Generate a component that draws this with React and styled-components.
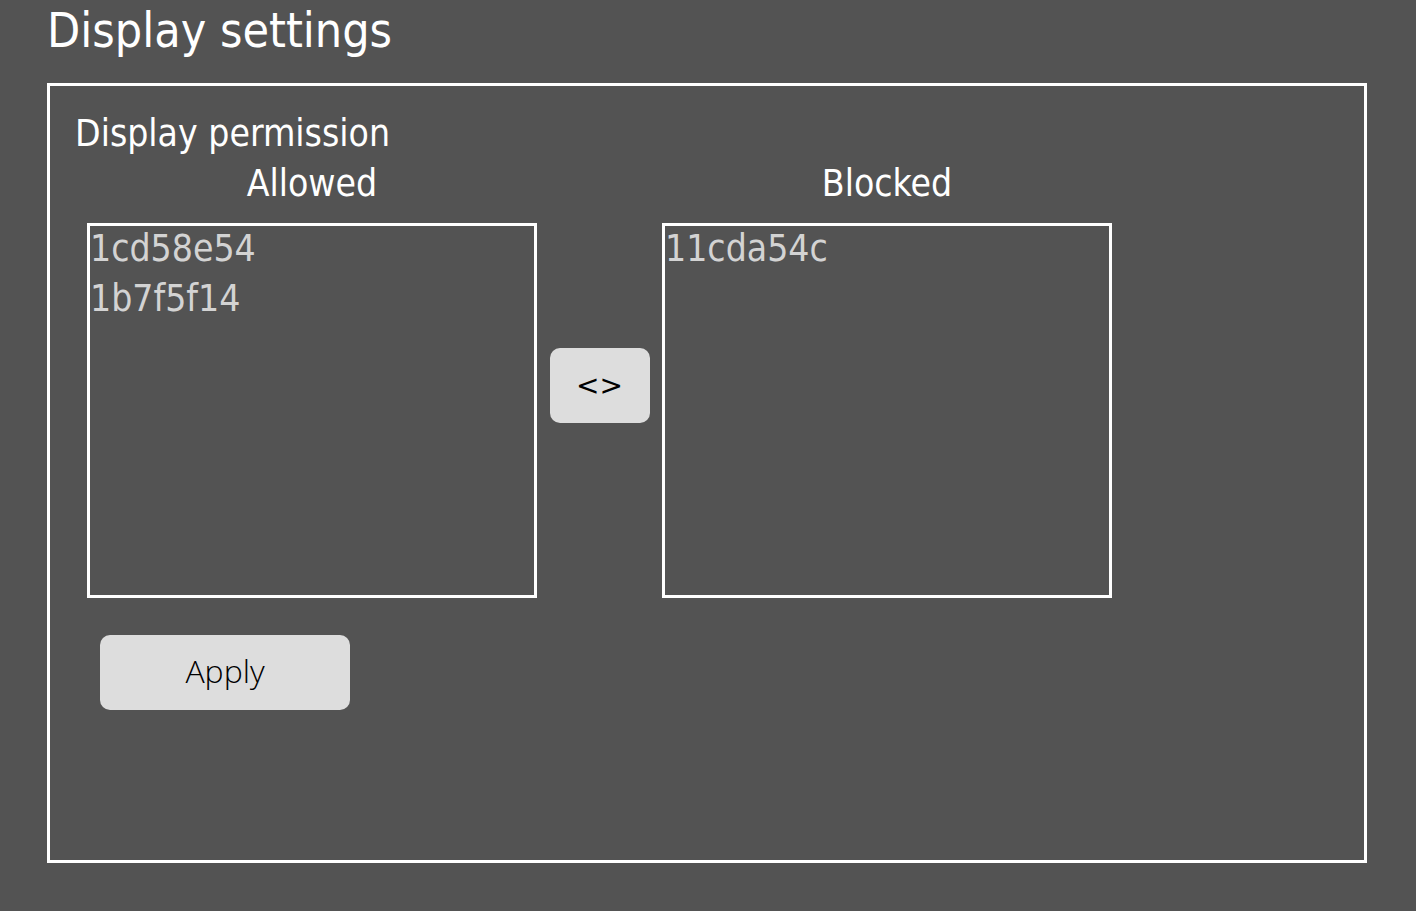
import React, { useState } from "react";
import styled, { createGlobalStyle } from "styled-components";

const GlobalStyle = createGlobalStyle`
  * { box-sizing: border-box; }
  body {
    margin: 0;
    background: #535353;
    color: #fff;
    font: 400 37px/50px "DejaVu Sans Condensed", "DejaVu Sans", sans-serif;
  }
`;

const Page = styled.main`
  min-height: 100vh;
  padding: 0 49px 48px 47px;
  display: flex;
  flex-direction: column;
`;

const Title = styled.h1`
  margin: 0 0 23px;
  font-size: 48px;
  font-weight: 400;
  line-height: 60px;
`;

const Panel = styled.section`
  flex: 1;
  border: 3px solid #fff;
  padding: 23px 25px;
`;

const Heading = styled.h2`
  margin: 0;
  font-size: 37px;
  font-weight: 400;
`;

const Lists = styled.div`
  display: flex;
  align-items: flex-end;
  margin-left: 12px;
`;

const Column = styled.div`
  width: 450px;
`;

const ColumnLabel = styled.h3`
  margin: 0 0 14px;
  text-align: center;
  font-size: 37px;
  font-weight: 400;
`;

const ListBox = styled.ul`
  height: 375px;
  margin: 0;
  padding: 0;
  border: 3px solid #fff;
  list-style: none;
  overflow: auto;
`;

const Item = styled.li`
  height: 50px;
  line-height: 46px;
  color: #d3d3d3;
`;

const Button = styled.button`
  height: 75px;
  width: ${(p) => p.$width};
  border: 0;
  border-radius: 10px;
  padding: 0 0 4px;
  background: #ddd;
  color: #000;
  font: 350 32px/50px "Open Sans", "Noto Sans", sans-serif;
`;

const SwapButton = styled(Button)`
  padding: 0;
  font: 400 28px/50px "DejaVu Sans", sans-serif;
`;

const SwapCell = styled.div`
  width: 125px;
  height: 375px;
  display: flex;
  align-items: center;
  justify-content: center;
  padding-bottom: 50px;
`;

const Actions = styled.div`
  padding: 37px 25px 0;
`;

function DeviceList({ label, items }) {
  return (
    <Column>
      <ColumnLabel>{label}</ColumnLabel>
      <ListBox aria-label={label}>
        {items.map((id) => <Item key={id}>{id}</Item>)}
      </ListBox>
    </Column>
  );
}

export default function App() {
  const [allowed, setAllowed] = useState(["1cd58e54", "1b7f5f14"]);
  const [blocked, setBlocked] = useState(["11cda54c"]);
  const swap = () => {
    setAllowed(blocked);
    setBlocked(allowed);
  };
  return (
    <>
      <GlobalStyle />
      <Page>
        <Title>Display settings</Title>
        <Panel>
          <Heading>Display permission</Heading>
          <Lists>
            <DeviceList label="Allowed" items={allowed} />
            <SwapCell>
              <SwapButton type="button" $width="100px" onClick={swap}>&lt;&gt;</SwapButton>
            </SwapCell>
            <DeviceList label="Blocked" items={blocked} />
          </Lists>
          <Actions>
            <Button type="button" $width="250px">Apply</Button>
          </Actions>
        </Panel>
      </Page>
    </>
  );
}
